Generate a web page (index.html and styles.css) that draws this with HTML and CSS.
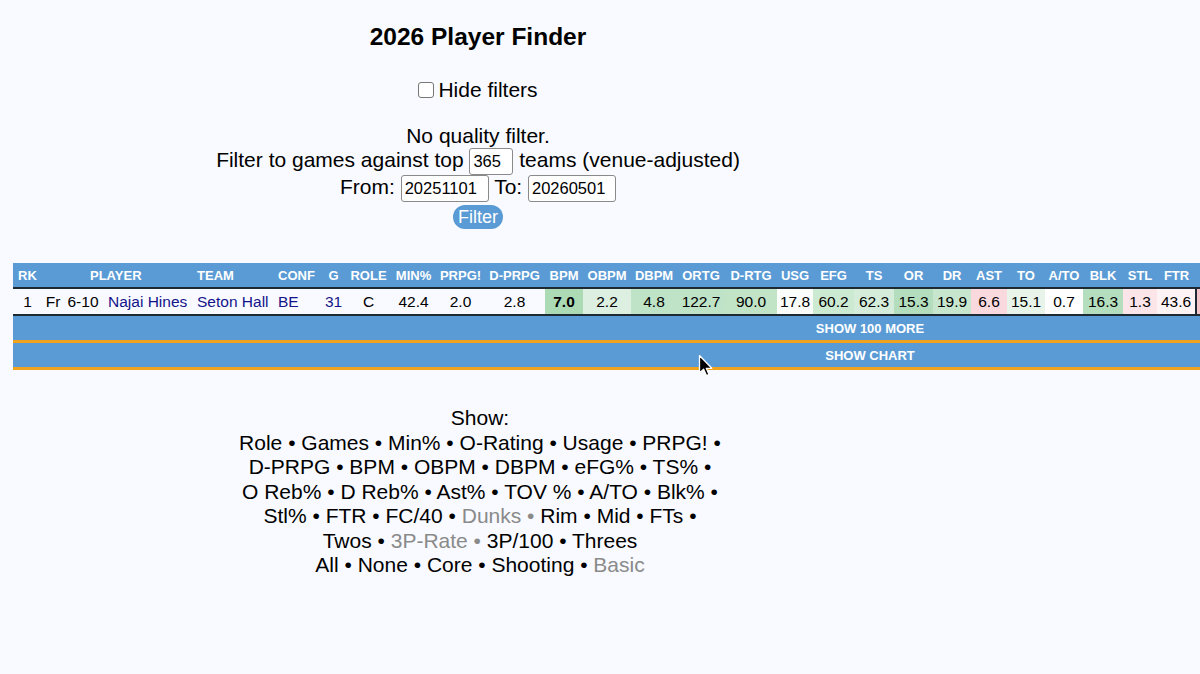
FILE: index.html
```html
<!DOCTYPE html>
<html>
<head>
<meta charset="utf-8">
<title>2026 Player Finder</title>
<link rel="stylesheet" href="styles.css">
</head>
<body>
<div class="top">
  <h2 class="title">2026 Player Finder</h2>
  <label class="hide"><input type="checkbox" class="cb">Hide filters</label>
  <div class="filters">
    <div class="line">No quality filter.</div>
    <div class="line">Filter to games against top <input class="box box-top" value="365"> teams (venue-adjusted)</div>
    <div class="line">From: <input class="box box-date" value="20251101"> To: <input class="box box-date" value="20260501"></div>
    <div class="line"><button class="btn">Filter</button></div>
  </div>
</div>

<div class="tablewrap">
<table class="stats">
  <colgroup>
    <col style="width:29px"><col style="width:22px"><col style="width:38px"><col style="width:91px">
    <col style="width:81px"><col style="width:46px"><col style="width:27px"><col style="width:43px">
    <col style="width:47px"><col style="width:47px"><col style="width:61px"><col style="width:38px">
    <col style="width:48px"><col style="width:46px"><col style="width:48px"><col style="width:52px">
    <col style="width:36px"><col style="width:41px"><col style="width:40px"><col style="width:39px">
    <col style="width:38px"><col style="width:36px"><col style="width:38px"><col style="width:38px">
    <col style="width:40px"><col style="width:34px"><col style="width:39px">
    <col style="width:53px"><col style="width:53px"><col style="width:53px"><col style="width:53px"><col style="width:53px">
    <col style="width:53px"><col style="width:53px"><col style="width:53px"><col style="width:53px"><col style="width:54px">
  </colgroup>
  <thead>
    <tr>
      <th>RK</th><th colspan="3" class="th-player">PLAYER</th><th class="th-left">TEAM</th><th class="th-left">CONF</th>
      <th>G</th><th>ROLE</th><th>MIN%</th><th>PRPG!</th><th>D-PRPG</th><th>BPM</th><th>OBPM</th><th>DBPM</th>
      <th>ORTG</th><th>D-RTG</th><th>USG</th><th>EFG</th><th>TS</th><th>OR</th><th>DR</th><th>AST</th><th>TO</th>
      <th>A/TO</th><th>BLK</th><th>STL</th><th>FTR</th>
      <th>FC/40</th><th>DUNKS</th><th>RIM</th><th>MID</th><th>FT</th><th>2P</th><th>3PR</th><th>3P/100</th><th>3P</th><th>PRPG</th>
    </tr>
  </thead>
  <tbody>
    <tr class="datarow">
      <td>1</td><td>Fr</td><td>6-10</td><td class="lnk left name">Najai Hines</td><td class="lnk left">Seton Hall</td><td class="lnk left">BE</td>
      <td class="lnk">31</td><td>C</td><td>42.4</td><td>2.0</td><td>2.8</td>
      <td class="bold" style="background:#abdab4">7.0</td>
      <td style="background:#dcefe0">2.2</td>
      <td style="background:#bfe3c6">4.8</td>
      <td style="background:#bfe3c6">122.7</td>
      <td style="background:#c1e4c7">90.0</td>
      <td style="background:#fbfdfb">17.8</td>
      <td style="background:#cce9d2">60.2</td>
      <td style="background:#d5ecda">62.3</td>
      <td style="background:#b3ddbc">15.3</td>
      <td style="background:#c8e6ce">19.9</td>
      <td style="background:#f9d9dd">6.6</td>
      <td style="background:#e8f4ea">15.1</td>
      <td style="background:#ffffff">0.7</td>
      <td style="background:#b4debd">16.3</td>
      <td style="background:#fce5e8">1.3</td>
      <td style="background:#fdf3f4">43.6</td>
      <td class="grp" style="background:#f3c4c9">6.1</td><td>0.0</td><td>60.0</td><td>33.3</td><td>62.5</td><td>55.6</td><td>0.0</td><td>0.0</td><td>0.0</td><td>2.0</td>
    </tr>
    <tr class="showrow"><td colspan="37">SHOW 100 MORE</td></tr>
    <tr class="showrow"><td colspan="37">SHOW CHART</td></tr>
  </tbody>
</table>
</div>

<div class="show">
  Show:<br>
  Role • Games • Min% • O-Rating • Usage • PRPG! •<br>
  D-PRPG • BPM • OBPM • DBPM • eFG% • TS% •<br>
  O Reb% • D Reb% • Ast% • TOV % • A/TO • Blk% •<br>
  Stl% • FTR • FC/40 • <span class="off">Dunks •</span> Rim • Mid • FTs •<br>
  Twos • <span class="off">3P-Rate •</span> 3P/100 • Threes<br>
  All • None • Core • Shooting • <span class="off">Basic</span>
</div>

<svg class="cursor" width="16" height="24" viewBox="0 0 16 24" aria-hidden="true">
  <path d="M1.5 1.5 L1.5 19 L5.6 15.2 L8.4 21.6 L11 20.5 L8.3 14.3 L13.8 14.3 Z" fill="#000" stroke="#fff" stroke-width="1.3" stroke-linejoin="round"/>
</svg>
</body>
</html>
```

FILE: styles.css
```css
html, body {
  margin: 0;
  padding: 0;
}
body {
  background: #f8faff;
  font-family: "Liberation Sans", Arial, Helvetica, sans-serif;
  color: #000;
  position: relative;
  overflow-x: hidden;
}
.top {
  width: 940px;
  margin-left: 8px;
  text-align: center;
  padding-top: 23px;
}
.title {
  font-size: 24.5px;
  font-weight: bold;
  margin: 0 0 27px 0;
  line-height: 28px;
}
.hide {
  display: inline-flex;
  align-items: center;
  font-size: 21px;
  line-height: 24px;
}
.cb {
  appearance: none;
  -webkit-appearance: none;
  width: 16px;
  height: 16px;
  margin: 0 4px 0 0;
  border: 1px solid #767676;
  border-radius: 3px;
  background: #fff;
}
.filters {
  margin-top: 22px;
  font-size: 21px;
}
.line {
  line-height: 24px;
}
.box {
  font-family: "Liberation Sans", Arial, sans-serif;
  font-size: 16.5px;
  height: 27px;
  box-sizing: border-box;
  border: 1px solid #8a8a8a;
  border-radius: 3px;
  background: #fff;
  padding: 0 3px;
  margin: 0;
  vertical-align: middle;
  color: #000;
}
.box-top {
  width: 44px;
}
.box-date {
  width: 88px;
}
.btn {
  font-family: "Liberation Sans", Arial, sans-serif;
  font-size: 18px;
  color: #fff;
  background: #5a9bd5;
  border: none;
  border-radius: 12px;
  height: 24px;
  padding: 0 5px;
  margin-top: 3px;
  vertical-align: top;
}
.tablewrap {
  width: 100%;
  overflow: hidden;
  margin-top: 34px;
  padding-left: 13px;
  box-sizing: border-box;
}
.stats {
  border-collapse: collapse;
  table-layout: fixed;
  width: 1714px;
}
.stats th {
  background: #5a9bd5;
  color: #fff;
  font-size: 13px;
  font-weight: bold;
  height: 24px;
  padding: 0;
  text-align: center;
  white-space: nowrap;
  overflow: hidden;
}
.stats th.th-player {
  text-align: left;
  padding-left: 48px;
}
.stats th.th-left {
  text-align: left;
  padding-left: 4px;
}
.datarow td {
  font-size: 15.5px;
  height: 25px;
  padding: 0;
  text-align: center;
  white-space: nowrap;
  overflow: hidden;
  border-top: 2px solid #1e2a33;
  border-bottom: 2px solid #1e2a33;
  background: #f8faff;
}
.datarow td.left {
  text-align: left;
  padding-left: 4px;
}
.datarow td.name {
  padding-left: 6px;
}
.datarow td.lnk {
  color: #14148a;
}
.datarow td.bold {
  font-weight: bold;
}
.datarow td.grp {
  border-left: 2px solid #1e2a33;
}
.showrow td {
  background: #5a9bd5;
  color: #fff;
  font-size: 13px;
  font-weight: bold;
  text-align: center;
  height: 24px;
  padding: 0;
  border-bottom: 3px solid #f2a31e;
}
.show {
  width: 540px;
  margin: 36px 0 0 210px;
  text-align: center;
  font-size: 21px;
  line-height: 24.5px;
}
.off {
  color: #8a8a8a;
}
.cursor {
  position: absolute;
  left: 698px;
  top: 354px;
}
```
